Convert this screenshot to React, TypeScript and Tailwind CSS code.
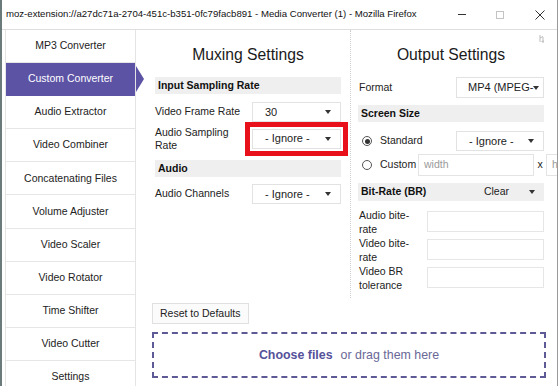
import React from 'react';

const NAV = [
  'MP3 Converter', 'Custom Converter', 'Audio Extractor', 'Video Combiner',
  'Concatenating Files', 'Volume Adjuster', 'Video Scaler', 'Video Rotator',
  'Time Shifter', 'Video Cutter', 'Settings',
];

function Caret() {
  return (
    <svg width="6" height="4" viewBox="0 0 6 4" className="shrink-0">
      <path d="M0 0 H6 L3 4 Z" fill="#333" />
    </svg>
  );
}

function Select({ value, className = '' }: { value: string; className?: string }) {
  return (
    <div className={`h-[20px] border border-[#e2e2e2] bg-white flex items-center pl-[12px] pr-[9px] text-[11px] text-[#222] ${className}`}>
      <span className="flex-1 whitespace-nowrap overflow-hidden">{value}</span>
      <Caret />
    </div>
  );
}

function Header({ children }: { children: React.ReactNode }) {
  return (
    <div className="h-[17px] bg-[#efefef] flex items-center px-[3px] text-[10.5px] font-bold text-[#111]">
      {children}
    </div>
  );
}

function Radio({ checked }: { checked?: boolean }) {
  return (
    <div className="w-[10px] h-[10px] rounded-full border border-[#555] bg-white flex items-center justify-center shrink-0">
      {checked && <div className="w-[5px] h-[5px] rounded-full bg-[#333]" />}
    </div>
  );
}

function TitleBar() {
  return (
    <div className="h-[29px] flex items-center pl-[4px] text-[9.6px] text-[#111] bg-white">
      <span className="flex-1 whitespace-nowrap">
        moz-extension://a27dc71a-2704-451c-b351-0fc79facb891 - Media Converter (1) - Mozilla Firefox
      </span>
      <div className="flex items-center">
        <div className="w-[8px] h-px bg-[#333] mr-[30px]" />
        <div className="w-[8px] h-[8px] border border-[#c4c4c4] mr-[31px]" />
        <svg width="10" height="10" viewBox="0 0 10 10" className="mr-[12px]">
          <path d="M0.5 0.5 L9.5 9.5 M9.5 0.5 L0.5 9.5" stroke="#333" strokeWidth="1" />
        </svg>
      </div>
    </div>
  );
}

function Sidebar() {
  return (
    <div className="ml-[3px] w-[131px] shrink-0 border-l border-r border-[#e4e4e4] flex flex-col">
      {NAV.map((label, i) => {
        const active = i === 1;
        return (
          <div
            key={label}
            className={`relative h-[33.1px] shrink-0 flex items-center justify-center text-[10.5px] border-b ${
              active ? 'bg-[#5c53a5] text-white border-[#5c53a5]' : 'text-[#222] border-[#e6e6e6]'
            }`}
          >
            {label}
            {active && (
              <div className="absolute right-[-9px] top-1/2 -translate-y-1/2 w-0 h-0 border-y-[13px] border-y-transparent border-l-[8px] border-l-[#5c53a5]" />
            )}
          </div>
        );
      })}
    </div>
  );
}

function MuxingColumn() {
  return (
    <div className="w-[214px] shrink-0 pl-[19px] pr-[9px] flex flex-col">
      <div className="h-[32px] mt-[9px] flex items-center justify-center text-[15.7px] text-[#1a1a1a]">
        Muxing Settings
      </div>
      <div className="mt-[6px]">
        <Header>Input Sampling Rate</Header>
      </div>
      <div className="mt-[8px] flex items-center text-[10.5px] text-[#222]">
        <span className="w-[97px] shrink-0">Video Frame Rate</span>
        <Select value="30" className="flex-1" />
      </div>
      <div className="mt-[2px] h-[29px] flex items-center text-[10.5px] text-[#222]">
        <span className="w-[97px] shrink-0 leading-[12.7px]">Audio Sampling Rate</span>
        <Select value="- Ignore -" className="flex-1 outline-[5px] outline-solid outline-[#e8101a] outline-offset-[2px]" />
      </div>
      <div className="mt-[7px]">
        <Header>Audio</Header>
      </div>
      <div className="mt-[7px] flex items-center text-[10.5px] text-[#222]">
        <span className="w-[97px] shrink-0">Audio Channels</span>
        <Select value="- Ignore -" className="flex-1" />
      </div>
    </div>
  );
}

function OutputColumn() {
  return (
    <div className="flex-1 min-w-0 border-l border-dotted border-[#cfcfcf] pl-[7px] overflow-hidden relative">
      <svg width="6" height="10" viewBox="0 0 6 10" className="absolute right-[12px] top-[4px]">
        <path d="M1 1 V8 M1 4 L4 2.5 M4 3 V9 M2.5 7.5 L5 7" stroke="#b5b5b5" strokeWidth="0.9" fill="none" />
      </svg>
      <div className="w-[186px] flex flex-col">
        <div className="h-[32px] mt-[9px] flex items-center justify-center text-[15.7px] text-[#1a1a1a]">
          Output Settings
        </div>
        <div className="mt-[6px] h-[21px] flex items-center text-[10.5px] text-[#222]">
          <span className="w-[98px] shrink-0 pl-[1px]">Format</span>
          <div className="flex-1 h-[21px] border border-[#e2e2e2] bg-white flex items-center pl-[11px] text-[11px] text-[#222]">
            <span className="whitespace-nowrap">MP4 (MPEG-</span>
            <Caret />
          </div>
        </div>
        <div className="mt-[7px]">
          <Header>Screen Size</Header>
        </div>
        <div className="mt-[9px] flex items-center text-[10.5px] text-[#222]">
          <div className="w-[98px] shrink-0 flex items-center pl-[4px] gap-[8px]">
            <Radio checked />
            <span>Standard</span>
          </div>
          <Select value="- Ignore -" className="flex-1" />
        </div>
        <div className="mt-[3px] flex items-center text-[10.5px] text-[#222] w-[220px]">
          <div className="w-[60px] shrink-0 flex items-center pl-[4px] gap-[8px] whitespace-nowrap">
            <Radio />
            <span>Custom</span>
          </div>
          <div className="w-[116px] h-[22px] shrink-0 border border-[#e4e4e4] bg-white flex items-center pl-[5px] text-[#9a9a9a]">
            width
          </div>
          <span className="w-[12px] shrink-0 text-center">x</span>
          <div className="w-[30px] h-[22px] shrink-0 border border-[#e4e4e4] bg-white flex items-center pl-[5px] text-[#9a9a9a]">
            height
          </div>
        </div>
        <div className="mt-[7px] h-[17.5px] bg-[#efefef] flex items-center px-[3px] text-[10.5px]">
          <span className="font-bold text-[#111] flex-1">Bit-Rate (BR)</span>
          <span className="text-[#222] mr-[20px]">Clear</span>
          <span className="mr-[6px]"><Caret /></span>
        </div>
        <div className="mt-[7px] flex flex-col">
          {['Audio bite-rate', 'Video bite-rate', 'Video BR tolerance'].map(l => (
            <div key={l} className="h-[28px] flex items-center text-[10.5px] text-[#222]">
              <span className="w-[69px] shrink-0 pl-[1px] pr-[10px] leading-[14px]">{l}</span>
              <div className="flex-1 h-[21px] border border-[#e6e6e6] bg-white" />
            </div>
          ))}
        </div>
      </div>
    </div>
  );
}

export default function App() {
  return (
    <div className="w-[560px] h-[386px] bg-white overflow-hidden font-['Liberation_Sans',Arial,sans-serif]">
      <div className="w-[558px] h-full flex flex-col border-l-2 border-l-[#6b7a7a] border-r border-r-[#9a9a9a] bg-white">
        <TitleBar />
        <div className="flex flex-1 min-h-0 border-t border-[#dedede] overflow-hidden">
          <Sidebar />
          <div className="flex-1 min-w-0 flex flex-col">
            <div className="flex h-[268px] shrink-0">
              <MuxingColumn />
              <OutputColumn />
            </div>
            <div className="pl-[16px] pr-[11px] flex flex-col">
              <div className="mt-[5px] self-start h-[21px] px-[7px] border border-[#e0e0e0] bg-[#fbfbfb] flex items-center text-[10.5px] text-[#222]">
                Reset to Defaults
              </div>
              <div className="mt-[8px] h-[46px] border-2 border-dashed border-[#5d5a96] flex items-center justify-center text-[12.4px]">
                <span className="font-bold text-[#55519a]">Choose files</span>
                <span className="ml-[8px] text-[#6a6897]">or drag them here</span>
              </div>
            </div>
          </div>
        </div>
      </div>
    </div>
  );
}
